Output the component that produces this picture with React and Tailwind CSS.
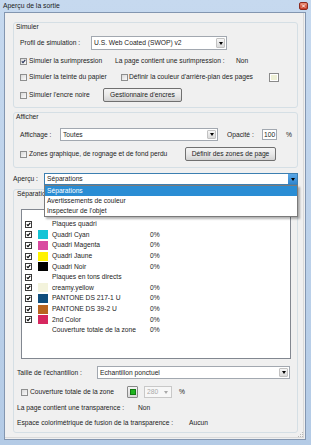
import React from "react";

function Check({ checked }) {
  return (
    <span className="relative inline-block w-[7px] h-[7px] shrink-0 border border-[#8e8f8f] bg-linear-to-br from-[#d9d9d9] to-[#fbfbfb]">
      {checked && (
        <svg viewBox="0 0 5 5" className="absolute inset-0 w-[5px] h-[5px]">
          <path d="M0.8 2.4 L2 3.7 L4.3 0.9" fill="none" stroke="#25325a" strokeWidth="1.1" />
        </svg>
      )}
    </span>
  );
}

function ListCheck() {
  return (
    <span className="relative inline-block w-[7px] h-[7px] shrink-0 border border-[#3a3a3a] bg-white">
      <svg viewBox="0 0 5 5" className="absolute inset-0 w-[5px] h-[5px]">
        <path d="M0.8 2.4 L2 3.7 L4.3 0.9" fill="none" stroke="#000" strokeWidth="1.1" />
      </svg>
    </span>
  );
}

function Tri({ color = "border-t-black" }) {
  return (
    <span className={`w-0 h-0 border-l-[2.5px] border-r-[2.5px] border-t-[3px] border-l-transparent border-r-transparent ${color}`} />
  );
}

function Select({ text, w, h }) {
  return (
    <div className={`flex items-stretch bg-white border border-[#a2a8b0] ${w} ${h}`}>
      <span className="flex-1 pl-[2px] flex items-center whitespace-nowrap overflow-hidden">{text}</span>
      <span className="w-[9px] m-[1px] border border-[#c2c2c2] rounded-[1px] bg-linear-to-b from-[#f7f7f7] to-[#d9d9d9] flex items-center justify-center">
        <Tri />
      </span>
    </div>
  );
}

function Button({ children, w }) {
  return (
    <div className={`flex items-center justify-center h-[14px] ${w} border border-[#707070] rounded-[2px] bg-linear-to-b from-[#f4f4f4] via-[#e9e9e9] to-[#d2d2d2] whitespace-nowrap`}>
      {children}
    </div>
  );
}

const rows = [
  { check: true, label: "Plaques quadri" },
  { check: true, color: "bg-[#14c4d6]", label: "Quadri Cyan", pct: "0%" },
  { check: true, color: "bg-[#d94aa0]", label: "Quadri Magenta", pct: "0%" },
  { check: true, color: "bg-[#fff200]", label: "Quadri Jaune", pct: "0%" },
  { check: true, color: "bg-[#000000]", label: "Quadri Noir", pct: "0%" },
  { check: true, label: "Plaques en tons directs" },
  { check: true, color: "bg-[#f3f3dc]", label: "creamy.yellow", pct: "0%" },
  { check: true, color: "bg-[#0f4d7c]", label: "PANTONE DS 217-1 U", pct: "0%" },
  { check: true, color: "bg-[#b8641f]", label: "PANTONE DS 39-2 U", pct: "0%" },
  { check: true, color: "bg-[#d6275f]", label: "2nd Color", pct: "0%" },
  { check: false, label: "Couverture totale de la zone", pct: "0%" },
];

export default function App() {
  return (
    <div className="w-[311px] h-[445px] flex flex-col bg-linear-to-b from-[#c6d9ef] to-[#b4cbe6] font-['Liberation_Sans',Arial,sans-serif] text-[6.7px] leading-[8px] text-[#1c1c1c] overflow-hidden">
      {/* Title bar */}
      <div className="h-[12px] shrink-0 flex items-center pl-[3px] pr-[3px]">
        <span className="text-[6.8px]">Aperçu de la sortie</span>
        <div className="ml-auto w-[9px] h-[8px] rounded-[2px] border border-[#8c2a20] bg-linear-to-b from-[#eb8a72] to-[#c63a24] flex items-center justify-center">
          <svg viewBox="0 0 5 4" className="w-[5px] h-[4px]">
            <path d="M1 0.5 L4 3.5 M4 0.5 L1 3.5" stroke="#fff" strokeWidth="0.9" />
          </svg>
        </div>
      </div>

      {/* Client area */}
      <div className="flex-1 ml-[4px] mr-[5px] mb-[5px] border border-[#8396b0] bg-[#f0f0f0] flex relative">
        <div className="flex-1 mr-[1px] mb-[1px] border-r border-b border-[#dadada] pl-[8px] pr-[5px] flex flex-col relative">
          {/* Simuler */}
          <div className="mt-[9px] h-[86px] shrink-0 border border-[#d5dfe5] rounded-[3px] flex flex-col">
            <div className="h-[8px] ml-[2px]">Simuler</div>
            <div className="mt-[5px] h-[14px] flex items-center pl-[6px]">
              <span className="w-[71px] whitespace-nowrap">Profil de simulation :</span>
              <Select text="U.S. Web Coated (SWOP) v2" w="w-[136px]" h="h-[14px]" />
            </div>
            <div className="mt-[6px] h-[10px] flex items-center pl-[6px] whitespace-nowrap">
              <div className="w-[95px] flex items-center gap-[2px]">
                <Check checked />
                <span>Simuler la surimpression</span>
              </div>
              <span className="w-[121px]">La page contient une surimpression :</span>
              <span>Non</span>
            </div>
            <div className="mt-[6px] h-[10px] flex items-center pl-[6px] whitespace-nowrap">
              <div className="w-[101px] flex items-center gap-[2px]">
                <Check />
                <span>Simuler la teinte du papier</span>
              </div>
              <div className="w-[148px] flex items-center gap-[1px]">
                <Check />
                <span>Définir la couleur d'arrière-plan des pages</span>
              </div>
              <span className="w-[10px] h-[9px] border border-[#8a8a8a] bg-[#eef0d6] shadow-[inset_0_0_0_1px_#ffffff]" />
            </div>
            <div className="mt-[6px] h-[14px] flex items-center pl-[6px] whitespace-nowrap">
              <div className="w-[83px] flex items-center gap-[2px]">
                <Check />
                <span>Simuler l'encre noire</span>
              </div>
              <Button w="w-[79px]">Gestionnaire d'encres</Button>
            </div>
          </div>

          {/* Afficher */}
          <div className="mt-[4px] h-[56px] shrink-0 border border-[#d5dfe5] rounded-[3px] flex flex-col">
            <div className="h-[8px] ml-[2px]">Afficher</div>
            <div className="mt-[7px] h-[13px] flex items-center pl-[6px] whitespace-nowrap">
              <span className="w-[40px]">Affichage :</span>
              <Select text="Toutes" w="w-[158px]" h="h-[13px]" />
              <span className="ml-[9px] w-[35px]">Opacité :</span>
              <span className="w-[15px] h-[11px] border border-[#a2a8b0] bg-white pl-[1px] flex items-center">100</span>
              <span className="ml-[9px]">%</span>
            </div>
            <div className="mt-[6px] h-[14px] flex items-center pl-[6px] whitespace-nowrap">
              <div className="w-[165px] flex items-center gap-[2px]">
                <Check />
                <span>Zones graphique, de rognage et de fond perdu</span>
              </div>
              <Button w="w-[91px]">Définir des zones de page</Button>
            </div>
          </div>

          {/* Aperçu */}
          <div className="mt-[5px] h-[12px] shrink-0 flex items-center whitespace-nowrap">
            <span className="w-[31px]">Aperçu :</span>
            <div className="w-[254px] h-[12px] flex items-stretch bg-white border border-[#3c7fb1]">
              <span className="flex-1 pl-[2px] flex items-center">Séparations</span>
              <span className="w-[9px] bg-linear-to-b from-[#5aa7e6] to-[#2f86d0] flex items-center justify-center">
                <Tri />
              </span>
            </div>
          </div>

          {/* Séparations */}
          <div className="mt-[4px] h-[244px] shrink-0 border border-[#d5dfe5] rounded-[3px] flex flex-col">
            <div className="h-[8px] ml-[3px]">Séparations</div>
            <div className="mt-[11px] ml-[7px] w-[270px] h-[150px] border border-[#828790] bg-white pt-[9px] flex flex-col">
              {rows.map((r, i) => (
                <div key={i} className="h-[10.6px] flex items-center pl-[3px] whitespace-nowrap">
                  {r.check ? <ListCheck /> : <span className="w-[7px] h-[7px]" />}
                  {r.color ? (
                    <span className={`ml-[6px] w-[10px] h-[9px] ${r.color}`} />
                  ) : (
                    <span className="ml-[6px] w-[10px] h-[9px]" />
                  )}
                  <span className="ml-[4px] w-[98px]">{r.label}</span>
                  <span>{r.pct || ""}</span>
                </div>
              ))}
            </div>
            <div className="mt-[7px] h-[13px] flex items-center pl-[3px] whitespace-nowrap">
              <span className="w-[80px]">Taille de l'échantillon :</span>
              <Select text="Echantillon ponctuel" w="w-[193px]" h="h-[13px]" />
            </div>
            <div className="mt-[7px] h-[12px] flex items-center pl-[7px] whitespace-nowrap">
              <div className="w-[106px] flex items-center gap-[2px]">
                <Check />
                <span>Couverture totale de la zone</span>
              </div>
              <span className="w-[11px] h-[12px] border border-[#8a8a8a] rounded-[1px] bg-linear-to-b from-[#f4f4f4] to-[#d8d8d8] flex items-center justify-center">
                <span className="w-[6px] h-[6px] bg-[#1fb51f] border border-[#137a13]" />
              </span>
              <span className="ml-[6px] w-[28px] h-[12px] border border-[#c8c8c8] bg-[#f7f7f7] flex items-center pl-[2px] text-[#a9a9a9]">
                <span className="flex-1">280</span>
                <span className="mr-[3px] flex items-center">
                  <Tri color="border-t-[#a9a9a9]" />
                </span>
              </span>
              <span className="ml-[7px]">%</span>
            </div>
            <div className="mt-[6px] h-[8px] flex items-center pl-[3px] whitespace-nowrap">
              <span className="w-[121px]">La page contient une transparence :</span>
              <span>Non</span>
            </div>
            <div className="mt-[7px] h-[8px] flex items-center pl-[3px] whitespace-nowrap">
              <span className="w-[172px]">Espace colorimétrique de fusion de la transparence :</span>
              <span>Aucun</span>
            </div>
          </div>

          {/* Dropdown popup */}
          <div className="absolute left-[39px] top-[172px] w-[254px] border border-[#7a7a7a] bg-white shadow-[2px_2px_2px_rgba(0,0,0,0.3)] flex flex-col whitespace-nowrap">
            <div className="h-[10px] leading-[10px] pl-[2px] bg-[#2a8dd4] text-white">Séparations</div>
            <div className="h-[10px] leading-[10px] pl-[2px]">Avertissements de couleur</div>
            <div className="h-[10px] leading-[10px] pl-[2px]">Inspecteur de l'objet</div>
          </div>
        </div>

        {/* Resize grip */}
        <svg viewBox="0 0 6 6" className="absolute right-[1px] bottom-[1px] w-[6px] h-[6px]">
          <rect x="4" y="0" width="1" height="1" fill="#b8b8b8" />
          <rect x="2" y="2" width="1" height="1" fill="#b8b8b8" />
          <rect x="4" y="2" width="1" height="1" fill="#b8b8b8" />
          <rect x="0" y="4" width="1" height="1" fill="#b8b8b8" />
          <rect x="2" y="4" width="1" height="1" fill="#b8b8b8" />
          <rect x="4" y="4" width="1" height="1" fill="#b8b8b8" />
        </svg>
      </div>
    </div>
  );
}
